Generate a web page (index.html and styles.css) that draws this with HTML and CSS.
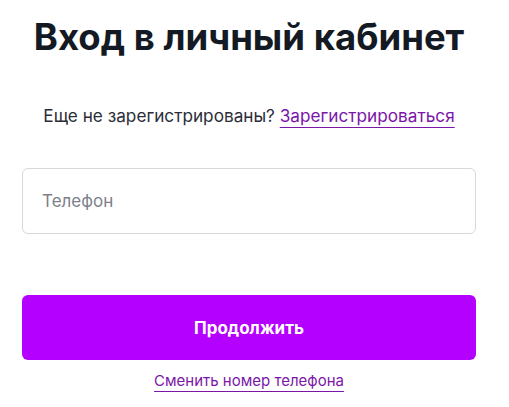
FILE: index.html
```html
<!DOCTYPE html>
<html lang="ru">
<head>
<meta charset="utf-8">
<link rel="stylesheet" href="styles.css">
</head>
<body>
<main class="login">
  <h1 class="title">Вход в личный кабинет</h1>
  <p class="register">Еще не зарегистрированы? <a class="link" href="#">Зарегистрироваться</a></p>
  <div class="field"><input class="input" type="text" placeholder="Телефон"></div>
  <button class="submit" type="button">Продолжить</button>
  <p class="change"><a class="link" href="#">Сменить номер телефона</a></p>
</main>
</body>
</html>
```
FILE: styles.css
```css
html, body {
  margin: 0;
  padding: 0;
  background: #fff;
}
body {
  font-family: Inter, "Noto Sans", sans-serif;
  color: #1e1f2b;
}
.login {
  width: 454px;
  margin-left: 22px;
  display: flex;
  flex-direction: column;
  align-items: stretch;
}
.title {
  margin: 15px 0 0;
  font-size: 36.5px;
  line-height: 44px;
  font-weight: 700;
  text-align: center;
  color: #141a24;
  letter-spacing: 0;
}
.register {
  margin: 45px 0 0;
  font-size: 17.2px;
  line-height: 24px;
  text-align: center;
  color: #2c2d38;
}
.link {
  color: #7b16a8;
  text-decoration: underline;
  text-decoration-thickness: 1px;
  text-underline-offset: 5px;
}
.field {
  margin-top: 40px;
}
.input {
  box-sizing: border-box;
  width: 100%;
  height: 66px;
  border: 1px solid #d8d8dc;
  border-radius: 6px;
  padding: 0 19px;
  font-family: inherit;
  font-size: 17px;
  color: #1e1f2b;
  outline: none;
}
.input::placeholder {
  color: #7e7f8a;
}
.submit {
  margin-top: 61px;
  height: 65px;
  border: none;
  border-radius: 6px;
  background: #b400ff;
  color: #fff;
  font-family: inherit;
  font-size: 17px;
  font-weight: 700;
  cursor: pointer;
}
.change {
  margin: 10px 0 0;
  font-size: 15px;
  line-height: 22px;
  text-align: center;
}
```
